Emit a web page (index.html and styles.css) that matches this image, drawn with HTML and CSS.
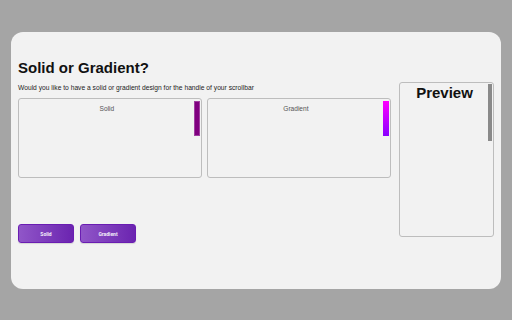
FILE: index.html
```html
<!DOCTYPE html>
<html lang="en">
<head>
<meta charset="utf-8">
<title>Solid or Gradient?</title>
<link rel="stylesheet" href="styles.css">
</head>
<body>
  <div class="card">
    <div class="main">
      <h1 class="title">Solid or Gradient?</h1>
      <p class="subtitle">Would you like to have a solid or gradient design for the handle of your scrollbar</p>
      <div class="options">
        <div class="option">
          <span class="option-label">Solid</span>
          <span class="bar bar-solid"></span>
        </div>
        <div class="option">
          <span class="option-label">Gradient</span>
          <span class="bar bar-gradient"></span>
        </div>
      </div>
      <div class="buttons">
        <button class="btn">Solid</button>
        <button class="btn">Gradient</button>
      </div>
    </div>
    <div class="side">
      <div class="preview">
        <h2 class="preview-title">Preview</h2>
        <span class="preview-bar"></span>
      </div>
    </div>
  </div>
</body>
</html>
```
FILE: styles.css
```css
html, body {
  margin: 0;
  padding: 0;
}
body {
  background: #a5a5a5;
  font-family: "Liberation Sans", Arial, sans-serif;
  padding: 32px 11px 31px 11px;
  box-sizing: border-box;
  width: 512px;
  height: 320px;
  overflow: hidden;
}
.card {
  background: #f2f2f2;
  border-radius: 12px;
  height: 257px;
  width: 490px;
  display: flex;
  box-sizing: border-box;
  padding: 0 6px 0 7px;
  gap: 8px;
}
.main {
  width: 373px;
  padding-top: 27px;
}
.title {
  margin: 0;
  font-size: 15px;
  line-height: 17px;
  font-weight: bold;
  color: #111;
}
.subtitle {
  margin: 8px 0 0 0;
  font-size: 6.7px;
  line-height: 8px;
  color: #222;
}
.options {
  display: flex;
  gap: 5px;
  margin-top: 6px;
}
.option {
  width: 184px;
  height: 80px;
  box-sizing: border-box;
  border: 1px solid #bdbdbd;
  border-radius: 3px;
  display: flex;
  align-items: flex-start;
  padding: 1.5px 1.5px 0 1px;
}
.option-label {
  flex: 1;
  text-align: center;
  font-size: 6.6px;
  line-height: 8px;
  color: #555;
  margin-top: 4.5px;
}
.bar {
  width: 5.7px;
  height: 35.7px;
  box-sizing: border-box;
}
.bar-solid {
  background: #800080;
  border: 0.5px solid #a040a0;
}
.bar-gradient {
  background: linear-gradient(to bottom, #ff00ff, #8a00ff);
}
.buttons {
  display: flex;
  gap: 6px;
  margin-top: 46px;
}
.btn {
  width: 56px;
  height: 19px;
  box-sizing: border-box;
  border: 1px solid #6a1db2;
  border-radius: 3px;
  background: linear-gradient(to right, #9056c8, #6b24b0);
  color: #f4eefa;
  font-family: Roboto, "Liberation Sans", sans-serif;
  font-size: 5px;
  font-weight: bold;
  padding: 0;
  box-shadow: 0 1px 1px rgba(0,0,0,0.12);
}
.side {
  padding-top: 50px;
}
.preview {
  width: 95px;
  height: 155px;
  box-sizing: border-box;
  border: 1px solid #bdbdbd;
  border-radius: 3px;
  display: flex;
  align-items: flex-start;
  padding: 1px 1px 0 1px;
}
.preview-title {
  flex: 1;
  margin: 0;
  text-align: center;
  font-size: 15px;
  line-height: 17px;
  font-weight: bold;
  color: #111;
}
.preview-bar {
  width: 4px;
  height: 57px;
  background: #8a8a8a;
}
```
